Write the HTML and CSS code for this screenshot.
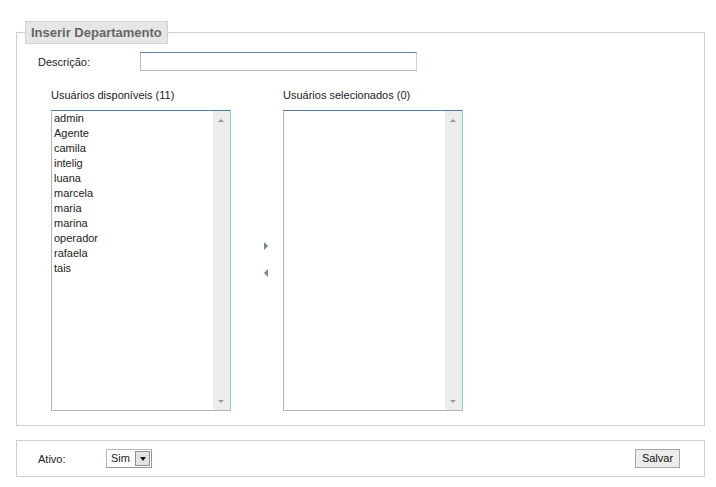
FILE: index.html
```html
<!DOCTYPE html>
<html>
<head>
<meta charset="utf-8">
<link rel="stylesheet" href="styles.css">
</head>
<body>
<div class="page">
  <fieldset class="panel">
    <legend class="legend">Inserir Departamento</legend>
    <div class="row-desc">
      <span class="lbl">Descrição:</span>
      <div class="input"></div>
    </div>
    <div class="lists">
      <div class="col">
        <div class="col-title">Usuários disponíveis (11)</div>
        <div class="listbox">
          <ul class="items">
            <li>admin</li><li>Agente</li><li>camila</li><li>intelig</li><li>luana</li><li>marcela</li><li>maria</li><li>marina</li><li>operador</li><li>rafaela</li><li>tais</li>
          </ul>
          <div class="scroll"><span class="up"></span><span class="down"></span></div>
        </div>
      </div>
      <div class="moves">
        <span class="arr right"></span>
        <span class="arr left"></span>
      </div>
      <div class="col">
        <div class="col-title">Usuários selecionados (0)</div>
        <div class="listbox">
          <ul class="items"></ul>
          <div class="scroll"><span class="up"></span><span class="down"></span></div>
        </div>
      </div>
    </div>
  </fieldset>
  <div class="footer">
    <span class="lbl ativo">Ativo:</span>
    <div class="select"><span class="sel-val">Sim</span><span class="sel-btn"><span class="caret"></span></span></div>
    <div class="spacer"></div>
    <div class="btn">Salvar</div>
  </div>
</div>
</body>
</html>
```
FILE: styles.css
```css
html, body { margin: 0; padding: 0; background: #fff; }
body { font-family: "Liberation Sans", Arial, sans-serif; font-size: 11px; color: #222; }
.page { padding: 21px 0 0 16px; width: 689px; }
.panel { margin: 0; padding: 0 0 14px 0; border: 1px solid #cfcfcf; }
.legend { margin-left: 8px; padding: 0 5px; height: 21px; line-height: 21px; background: #e6e6e6; border: 1px solid #d2d2d2; color: #666; font-weight: bold; font-size: 13px; }
.row-desc { display: flex; align-items: center; height: 19px; margin-top: 8px; padding-left: 21px; }
.lbl { display: inline-block; }
.row-desc .lbl { width: 102px; }
.input { width: 275px; height: 17px; border: 1px solid #b9b9b9; border-top-color: #5a7f98; border-right-color: #c4d4d4; background: #fff; }
.lists { display: flex; padding-left: 34px; margin-top: 17px; }
.col { display: flex; flex-direction: column; width: 180px; }
.col-title { height: 15px; line-height: 15px; }
.listbox { margin-top: 7px; height: 299px; border: 1px solid #b4b4b4; border-top-color: #4f7b96; border-right-color: #95cccc; display: flex; background: #fff; }
.items { list-style: none; margin: 0; padding: 0 0 0 2px; flex: 1; }
.items li { height: 15px; line-height: 15px; font-size: 11px; }
.scroll { width: 17px; background: #ececec; position: relative; }
.up, .down { position: absolute; left: 5px; width: 0; height: 0; border-left: 3px solid transparent; border-right: 3px solid transparent; }
.up { top: 8px; border-bottom: 3px solid #999; }
.down { bottom: 7px; border-top: 3px solid #999; }
.moves { width: 52px; display: flex; flex-direction: column; align-items: center; padding: 154px 0 0 18px; box-sizing: border-box; }
.arr { width: 0; height: 0; border-top: 4px solid transparent; border-bottom: 4px solid transparent; }
.arr.right { border-left: 4px solid #6f8a96; }
.arr.left { border-right: 4px solid #6f8a96; margin-top: 19px; }
.footer { margin-top: 14px; height: 35px; border: 1px solid #cfcfcf; display: flex; align-items: center; padding: 0 24px 0 21px; }
.ativo { width: 68px; }
.select { display: flex; height: 17px; border: 1px solid #b8b8b8; border-color: #b8b8b8 #8a9aa6 #8a9aa6 #b8b8b8; background: #fff; }
.sel-val { width: 28px; line-height: 17px; padding-left: 4px; box-sizing: border-box; }
.sel-btn { width: 15px; height: 15px; margin: 1px 1px 1px 0; background: #e2e2e2; border: 1px solid #8f8f8f; box-sizing: border-box; display: flex; align-items: center; justify-content: center; }
.caret { width: 0; height: 0; border-left: 3px solid transparent; border-right: 3px solid transparent; border-top: 4px solid #111; }
.spacer { flex: 1; }
.btn { height: 19px; width: 45px; box-sizing: border-box; border: 1px solid #a7a7a7; background: #ececec; text-align: center; line-height: 17px; font-size: 11px; color: #111; }
```
